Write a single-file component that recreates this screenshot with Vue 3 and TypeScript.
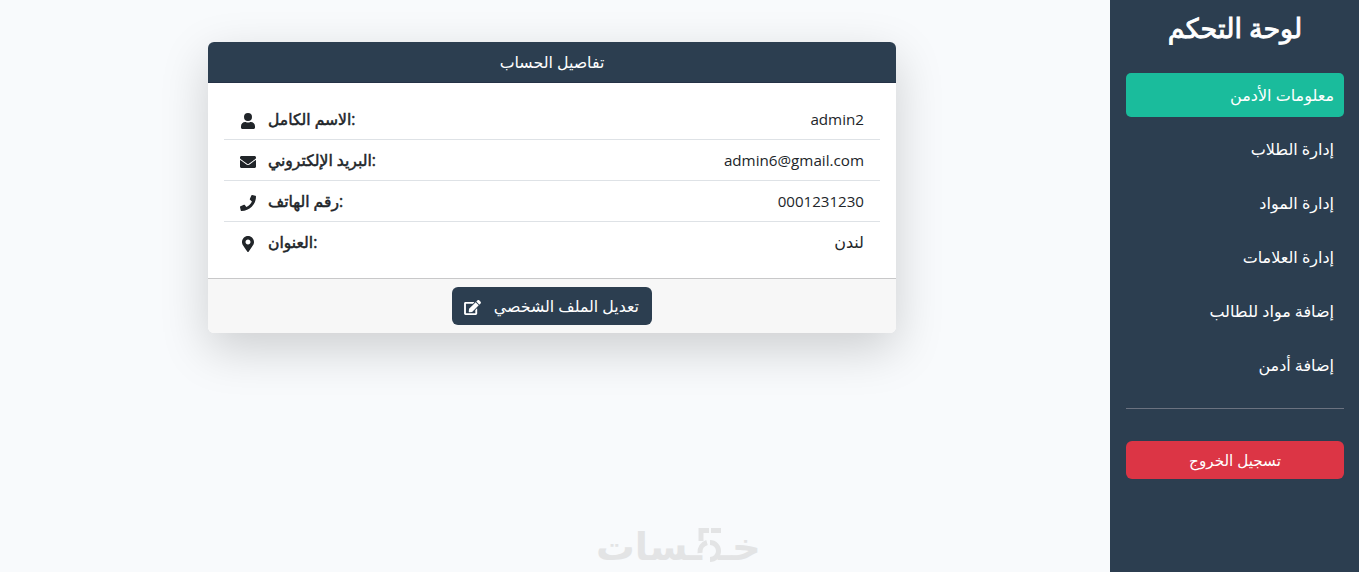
<script setup lang="ts">
interface Row { icon: string; box: string; label: string; value: string; cls: string }

const rows: Row[] = [
  { cls: 'name', label: 'الاسم الكامل:', value: 'admin2', box: '0 0 448 512', icon: 'M224 256A128 128 0 1 0 224 0a128 128 0 0 0 0 256zm90 32h-17a174 174 0 0 1-146 0h-17C60 288 0 348 0 422v42c0 27 21 48 48 48h352c27 0 48-21 48-48v-42c0-74-60-134-134-134z' },
  { cls: 'mail', label: 'البريد الإلكتروني:', value: 'admin6@gmail.com', box: '0 0 512 512', icon: 'M502.3 190.8c3.9-3.1 9.7-.2 9.7 4.7V400c0 26.500-21.500 48-48 48H48c-26.500 0-48-21.500-48-48V195.600c0-5 5.700-7.800 9.700-4.700 22.400 17.400 52.100 39.500 154.100 113.600 21.100 15.400 56.700 47.800 92.200 47.600 35.700.3 72-32.800 92.300-47.600 102-74.100 131.600-96.300 154-113.700zM256 320c23.200.4 56.600-29.200 73.400-41.400 132.700-96.300 142.800-104.700 173.400-128.700 5.800-4.500 9.200-11.500 9.200-18.900v-19c0-26.500-21.500-48-48-48H48c-26.500 0-48 21.500-48 48v19c0 7.400 3.400 14.300 9.200 18.900 30.600 23.900 40.700 32.400 173.400 128.700 16.800 12.200 50.200 41.800 73.400 41.400z' },
  { cls: 'phone', label: 'رقم الهاتف:', value: '0001231230', box: '0 0 512 512', icon: 'M493.4 24.600l-104-24c-11.300-2.600-22.900 3.300-27.500 13.900l-48 112c-4.200 9.800-1.400 21.300 6.900 28l60.600 49.600c-36 76.700-98.900 140.500-177.200 177.200l-49.600-60.600c-6.800-8.300-18.200-11.100-28-6.900l-112 48C3.900 366.500-2 378.100.6 389.400l24 104C27.100 504.200 36.700 512 48 512c256.100 0 464-207.500 464-464 0-11.200-7.700-20.900-18.600-23.400z' },
  { cls: 'place', label: 'العنوان:', value: 'لندن', box: '0 0 384 512', icon: 'M172.268 501.670C26.970 291.031 0 269.413 0 192 0 85.961 85.961 0 192 0s192 85.961 192 192c0 77.413-26.970 99.031-172.268 309.670-9.535 13.774-29.930 13.773-39.464 0zM192 272c44.183 0 80-35.817 80-80s-35.817-80-80-80-80 35.817-80 80 35.817 80 80 80z' },
]

const links: string[] = [
  'معلومات الأدمن',
  'إدارة الطلاب',
  'إدارة المواد',
  'إدارة العلامات',
  'إضافة مواد للطالب',
  'إضافة أدمن',
]
</script>

<template>
  <div class="page">
    <main class="content">
      <section class="card">
        <header class="card-header">تفاصيل الحساب</header>
        <ul class="details">
          <li v-for="row in rows" :key="row.cls" class="detail">
            <svg class="icon" :viewBox="row.box" width="16" height="16"><path :d="row.icon" fill="currentColor" /></svg>
            <strong class="label">{{ row.label }}</strong>
            <span class="value" :class="row.cls">{{ row.value }}</span>
          </li>
        </ul>
        <footer class="card-footer">
          <button class="edit" type="button">
            <svg class="edit-icon" viewBox="0 0 576 512" width="17" height="15"><path fill="currentColor" d="M402.600 83.200l90.200 90.200c3.800 3.800 3.800 10 0 13.800L274.400 405.600l-92.800 10.300c-12.400 1.400-22.900-9.100-21.500-21.500l10.300-92.800L388.800 83.200c3.800-3.800 10-3.800 13.800 0zm162-22.900l-48.800-48.800c-15.200-15.200-39.900-15.200-55.200 0l-35.400 35.400c-3.800 3.800-3.800 10 0 13.800l90.200 90.200c3.800 3.800 10 3.800 13.800 0l35.400-35.400c15.200-15.300 15.200-40 0-55.200zM384 346.200V448H64V128h229.800c3.200 0 6.200-1.300 8.500-3.500l40-40c7.600-7.600 2.200-20.500-8.500-20.500H48C21.500 64 0 85.500 0 112v352c0 26.500 21.500 48 48 48h352c26.500 0 48-21.500 48-48V306.200c0-10.700-12.900-16-20.500-8.500l-40 40c-2.200 2.300-3.500 5.300-3.500 8.500z" /></svg>
            <span class="edit-text">تعديل الملف الشخصي</span>
          </button>
        </footer>
      </section>

      <svg class="brand" viewBox="0 0 170 48" width="170" height="48">
        <text class="brand-text" x="2" y="36" textLength="106" lengthAdjust="spacingAndGlyphs" direction="ltr">ـسات</text>
        <text class="brand-text" x="124" y="36" textLength="43" lengthAdjust="spacingAndGlyphs" direction="ltr">خـ</text>
        <path class="brand-mark" d="M115 6.500H107V17M117 6.500H127M106 29a10 10 0 0 1 7-10.500M116 18.500a8.500 8.500 0 0 1 0 17" />
      </svg>
    </main>

    <aside class="sidebar" dir="rtl">
      <h1 class="title">لوحة التحكم</h1>
      <nav class="nav">
        <a v-for="(link, i) in links" :key="link" class="link" :class="{ active: i === 0 }">{{ link }}</a>
      </nav>
      <hr class="rule">
      <button class="logout" type="button">تسجيل الخروج</button>
    </aside>
  </div>
</template>

<style>
body {
  background: #f8f9fa;
}
</style>

<style scoped>
* {
  box-sizing: border-box;
}
.page {
  display: flex;
  height: 572px;
  overflow: hidden;
  background: #f8fafc;
  color: #212529;
  font-family: "Segoe UI", "Open Sans", "DejaVu Sans", sans-serif;
  font-size: 16px;
  line-height: 24px;
}
.content {
  flex: 1;
  display: flex;
  flex-direction: column;
  align-items: center;
  justify-content: space-between;
  padding: 42px 6px 0 0;
}
.card {
  width: 688px;
  border-radius: 6px;
  background: #fff;
  box-shadow: 0 16px 48px rgba(0, 0, 0, 0.175);
  overflow: hidden;
}
.card-header {
  height: 41px;
  padding-top: 8px;
  border-bottom: 1px solid #253246;
  background: #2c3e50;
  color: #fff;
  font-size: 15.8px;
  text-align: center;
}
.details {
  margin: 0;
  padding: 16px 16px 15px;
  list-style: none;
}
.detail {
  display: flex;
  align-items: center;
  height: 41px;
  padding: 0 16px;
  border-bottom: 1px solid #dee2e6;
}
.detail:last-child {
  padding-bottom: 1px;
  border-bottom: 0;
}
.icon {
  margin: 3px 12px 0 0;
}
.label {
  font-size: 15.6px;
  font-weight: 400;
  -webkit-text-stroke: 0.5px currentColor;
}
.value {
  margin-left: auto;
  font-size: 15.2px;
}
.value.place {
  font-size: 16px;
}
.value.phone {
  font-size: 15.1px;
}
.card-footer {
  display: flex;
  justify-content: center;
  height: 55px;
  padding-top: 8px;
  border-top: 1px solid #c8c8c9;
  background: #f7f7f7;
}
.edit {
  display: flex;
  align-items: center;
  justify-content: space-between;
  width: 200px;
  height: 38px;
  padding: 0 13px 0 12px;
  border: 0;
  border-radius: 6px;
  background: #2c3e50;
  color: #fff;
  font: inherit;
}
.edit-icon {
  margin-top: 3px;
}
.edit-text {
  font-size: 15.8px;
}
.brand {
  margin-left: 254px;
}
.brand-text {
  font: 700 38px "DejaVu Sans", sans-serif;
  fill: #e3e4e5;
}
.brand-mark {
  fill: none;
  stroke: #e3e4e5;
  stroke-width: 5;
}
.sidebar {
  width: 249px;
  padding: 11px 15px 10px 16px;
  background: #2c3e50;
  color: #fff;
}
.title {
  margin: 0 0 28px;
  font-size: 27px;
  font-weight: 400;
  line-height: 34px;
  text-align: center;
  -webkit-text-stroke: 0.9px currentColor;
}
.nav {
  display: flex;
  flex-direction: column;
  gap: 10px;
}
.link {
  height: 44px;
  padding: 10px;
  border-radius: 5px;
  color: #fff;
}
.link.active {
  background: #1abc9c;
}
.rule {
  height: 1px;
  margin: 21px 0 32px;
  border: 0;
  background: #6b7280;
}
.logout {
  width: 100%;
  height: 38px;
  padding: 0;
  border: 0;
  border-radius: 6px;
  background: #dc3545;
  color: #fff;
  font: inherit;
  font-size: 15.2px;
}
</style>
